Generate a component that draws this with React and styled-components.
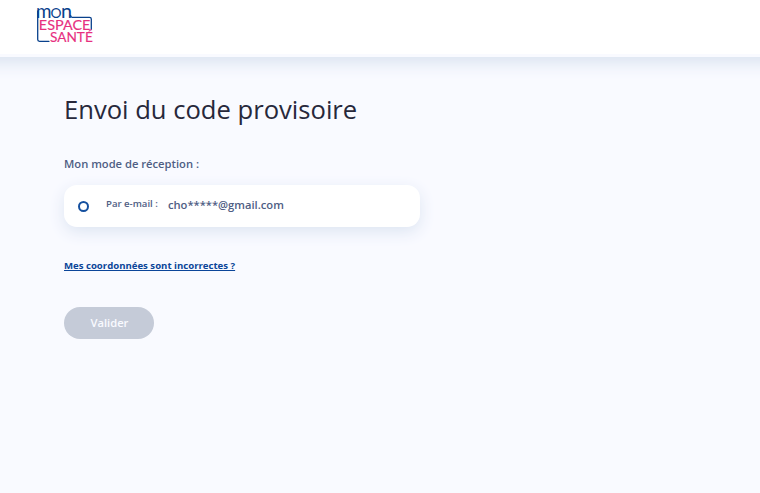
import React from 'react'

import styled, { createGlobalStyle } from 'styled-components';

const GlobalStyle = createGlobalStyle`
    * {
        box-sizing: border-box;
    }

    body {
        margin: 0;
        min-height: 100vh;
        overflow: hidden;
        background: #f9faff;
        font-family: 'Open Sans', 'Noto Sans', sans-serif;
    }
`;

const Header = styled.header`
    height: 57px;
    margin: 0 -24px;
    padding: 7px 60px;
    background: #fff;
    border-bottom: 3px solid #f9faff;
    box-shadow: 0 6px 16px #dae3f0;
`;

const LogoSC = styled.svg`
    display: block;
    width: 58px;
    height: 37px;
    overflow: visible;

    .logo__frame {
        fill: none;
        stroke: #09418c;
        stroke-width: 1.3;
        stroke-linecap: round;
        stroke-linejoin: round;
    }

    .logo__word {
        font-family: Lato, 'Open Sans', sans-serif;
        font-weight: 400;
        font-size: 14px;
        fill: #e7307f;
        stroke: #e7307f;
        stroke-width: .15;
    }

    .logo__word--blue {
        fill: #09418c;
        stroke: none;
    }

    .logo__word--tall {
        font-size: 19.4px;
    }
`;

const Main = styled.main`
    display: flex;
    flex-direction: column;
    align-items: flex-start;
    padding: 35px 64px;
`;

const Title = styled.h1`
    margin: 0;
    font-size: 25.6px;
    font-weight: 400;
    line-height: 36px;
    color: #27283b;
`;

const Label = styled.p`
    margin: 27px 0 12px;
    font-size: 11.2px;
    font-weight: 600;
    line-height: 18px;
    color: #4f5e84;
`;

const Choice = styled.label`
    display: flex;
    align-items: center;
    width: 356px;
    height: 42px;
    padding: 0 14px;
    border-radius: 13px;
    background: #fff;
    box-shadow: 0 5px 16px #dde5f2;
    color: #4f5e84;

    .choice__radio {
        appearance: none;
        width: 11px;
        height: 11px;
        margin: 1px 17px 0 0;
        border: 2px solid #15509f;
        border-radius: 50%;
    }

    .choice__type {
        margin: 0 10px 5px 0;
        font-size: 9.6px;
        font-weight: 600;
    }

    .choice__value {
        margin-bottom: 3px;
        font-size: 11.2px;
        font-weight: 600;
    }
`;

const Link = styled.a`
    margin-top: 30px;
    font-size: 9.6px;
    font-weight: 700;
    line-height: 18px;
    color: #0b4599;
    text-decoration: underline;
`;

const Button = styled.button`
    width: 90px;
    height: 32px;
    margin-top: 32px;
    padding: 0 0 2px 1px;
    border: 0;
    border-radius: 16px;
    background: #c5cbd8;
    color: #f9faff;
    font-family: inherit;
    font-size: 11.2px;
    font-weight: 600;
`;

const Logo = () => {
    return (
        <LogoSC viewBox="0 0 58 37" role="img" aria-label="Mon espace santé">
            <path className='logo__frame' d="M1.7 4V32.5Q1.7 34.3 3.5 34.3H13" />
            <path className='logo__frame' d="M34.6 8.5Q34.6 10.3 36.2 10.3H53.5Q55.3 10.3 55.3 12V22.5" />
            <text className='logo__word logo__word--blue logo__word--tall' x="0" y="11" textLength="15.5" lengthAdjust="spacingAndGlyphs">m</text>
            <text className='logo__word logo__word--blue' x="14.6" y="11" textLength="11" lengthAdjust="spacingAndGlyphs">O</text>
            <text className='logo__word logo__word--blue logo__word--tall' x="25" y="11" textLength="11" lengthAdjust="spacingAndGlyphs">n</text>
            <text className='logo__word' x="2.8" y="23" textLength="51.6" lengthAdjust="spacingAndGlyphs">ESPACE</text>
            <text className='logo__word' x="14" y="35" textLength="42.8" lengthAdjust="spacingAndGlyphs">SANTÉ</text>
        </LogoSC>
    )
}

const App = () => {
    return (
        <>
            <GlobalStyle />
            <Header>
                <Logo />
            </Header>
            <Main>
                <Title>Envoi du code provisoire</Title>
                <Label>Mon mode de réception :</Label>
                <Choice>
                    <input className='choice__radio' type="radio" name="mode" />
                    <span className='choice__type'>Par e-mail :</span>
                    <span className='choice__value'>cho*****@gmail.com</span>
                </Choice>
                <Link href="#">Mes coordonnées sont incorrectes ?</Link>
                <Button type="button" disabled>Valider</Button>
            </Main>
        </>
    )
}

export default App
